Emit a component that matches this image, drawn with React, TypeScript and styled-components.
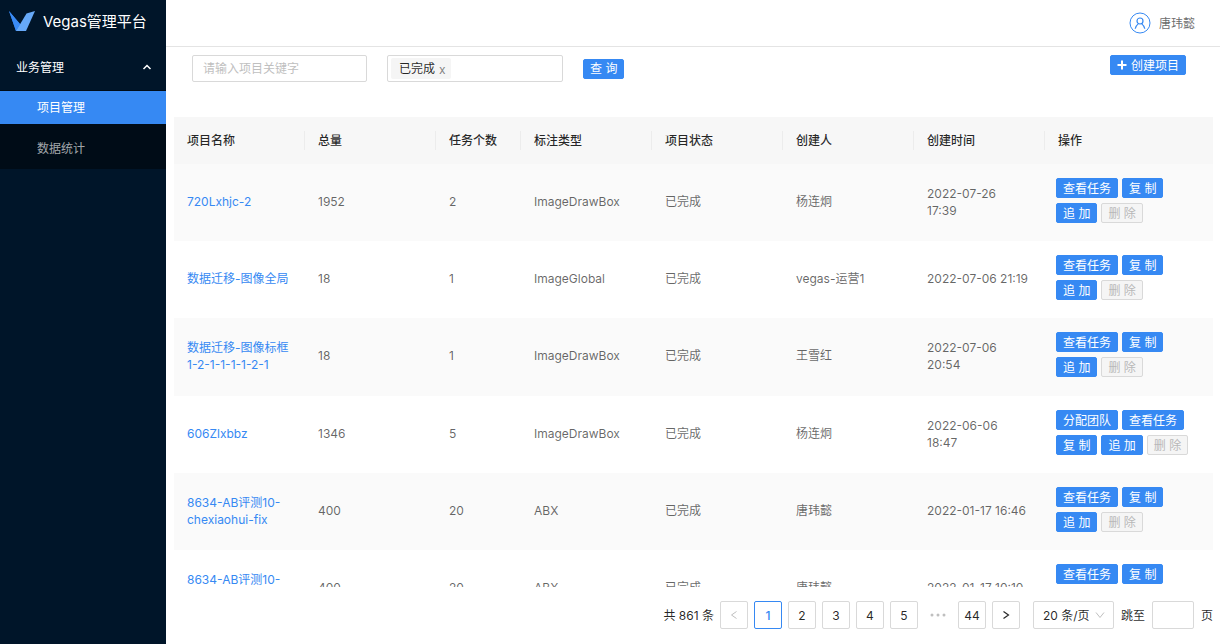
import React from "react";
import styled, { createGlobalStyle } from "styled-components";

const blue = "#3689f3";
const line = "#d9d9d9";

const GlobalStyle = createGlobalStyle`
  *, *::before, *::after { box-sizing: border-box; }
  body {
    margin: 0;
    background: #fff;
    color: rgba(0, 0, 0, 0.85);
    font: 12px/17px Inter, "Noto Sans CJK SC", sans-serif;
  }
  button, input, select { font: inherit; color: inherit; margin: 0; }
  a { text-decoration: none; }
`;

const Shell = styled.div`
  display: flex;
  height: 100vh;
`;

const Sidebar = styled.aside`
  flex: 0 0 166px;
  background: #001529;
`;

const Brand = styled.div`
  display: flex;
  align-items: center;
  gap: 8px;
  height: 42px;
  padding-left: 9px;
  color: #fff;
  font-size: 15px;
`;

const GroupButton = styled.button`
  display: flex;
  align-items: center;
  justify-content: space-between;
  width: 100%;
  height: 48px;
  padding: 2px 14px 0 16px;
  border: 0;
  background: none;
  color: #fff;
`;

const SubMenu = styled.nav`
  display: grid;
  gap: 8px;
  padding: 1px 0 4px;
  background: #000c17;
`;

const MenuLink = styled.a<{ $active?: boolean }>`
  display: flex;
  align-items: center;
  height: 33px;
  padding-left: 37px;
  color: ${(p) => (p.$active ? "#fff" : "rgba(255, 255, 255, 0.65)")};
  background: ${(p) => (p.$active ? blue : "transparent")};
`;

const Main = styled.main`
  flex: 1;
  min-width: 0;
  display: flex;
  flex-direction: column;
`;

const Header = styled.header`
  display: flex;
  align-items: center;
  justify-content: flex-end;
  gap: 8px;
  height: 47px;
  flex: none;
  padding-right: 25px;
  border-bottom: 1px solid #e4e4e4;
  color: rgba(0, 0, 0, 0.6);
`;

const Toolbar = styled.form`
  display: flex;
  align-items: flex-start;
  justify-content: space-between;
  padding: 8px 34px 35px 26px;
`;

const Filters = styled.div`
  display: flex;
  align-items: center;
  gap: 20px;
`;

const TextInput = styled.input`
  width: 175px;
  height: 27px;
  padding: 0 10px;
  border: 1px solid ${line};
  border-radius: 2px;
  background: #fff;
  &::placeholder { color: #bfbfbf; opacity: 1; }
`;

const TagSelect = styled.div`
  display: flex;
  align-items: center;
  width: 176px;
  height: 27px;
  padding: 0 3px;
  border: 1px solid ${line};
  border-radius: 2px;
`;

const Tag = styled.span`
  display: flex;
  align-items: center;
  gap: 4px;
  height: 21px;
  padding: 0 5px 0 8px;
  background: #f5f5f5;
  border-radius: 2px;
`;

const TagRemove = styled.button`
  display: flex;
  padding: 1px 0 0;
  border: 0;
  background: none;
  color: rgba(0, 0, 0, 0.5);
`;

const TagInput = styled.input`
  flex: 1;
  min-width: 0;
  border: 0;
  outline: 0;
  background: none;
`;

const Button = styled.button`
  display: inline-flex;
  align-items: center;
  justify-content: center;
  gap: 4px;
  height: 20px;
  padding: 0 6px;
  border: 1px solid ${blue};
  border-radius: 2px;
  background: ${blue};
  color: #fff;
  white-space: pre;
  &:disabled {
    border-color: ${line};
    background: #f5f5f5;
    color: #b8b8b8;
  }
`;

const TableArea = styled.div`
  flex: 1;
  min-height: 0;
  margin: 0 7px 0 8px;
  overflow: auto;
  scrollbar-width: none;
`;

const Table = styled.table`
  width: 100%;
  table-layout: fixed;
  border-collapse: separate;
  border-spacing: 0;
`;

const HeadCell = styled.th`
  position: sticky;
  top: 0;
  height: 47px;
  padding: 0;
  background: #f7f7f7;
  font-weight: 500;
  text-align: left;
`;

const HeadLabel = styled.div<{ $last?: boolean }>`
  padding: 1px 13px;
  border-right: 1px solid ${(p) => (p.$last ? "transparent" : "#ececec")};
`;

const Row = styled.tr`
  &:nth-child(odd) { background: #fafafa; }
  &:nth-child(3n) td { border-bottom: 1px solid #fafafa; }
`;

const Cell = styled.td`
  height: 77px;
  padding: 0 13px 2px;
  vertical-align: middle;
  color: rgba(0, 0, 0, 0.6);
  white-space: pre-line;
`;

const ProjectLink = styled.a`
  color: ${blue};
`;

const ActionCell = styled(Cell)`
  padding: 14px 13px 13px 11px;
`;

const Actions = styled.div`
  display: flex;
  flex-wrap: wrap;
  gap: 5px 4px;
  padding-bottom: 5px;
`;

const Pager = styled.nav`
  display: flex;
  align-items: center;
  justify-content: flex-end;
  gap: 6px;
  flex: none;
  padding: 14px 7px 15px;
`;

const PageButton = styled.button<{ $active?: boolean }>`
  display: flex;
  align-items: center;
  justify-content: center;
  width: 28px;
  height: 28px;
  padding: 0;
  border: 1px solid ${(p) => (p.$active ? blue : line)};
  border-radius: 2px;
  background: #fff;
  color: ${(p) => (p.$active ? blue : "rgba(0, 0, 0, 0.85)")};
  font-weight: ${(p) => (p.$active ? 500 : 400)};
  &:disabled { color: #bfbfbf; }
`;

const Jumper = styled.button`
  display: flex;
  align-items: center;
  justify-content: center;
  width: 28px;
  height: 28px;
  padding: 0;
  border: 0;
  background: none;
`;

const SizeBox = styled.label`
  display: grid;
  align-items: center;
  margin-left: 7px;
  color: #bfbfbf;
  & > * { grid-area: 1 / 1; }
  & > svg { justify-self: end; margin-right: 9px; pointer-events: none; }
`;

const SizeSelect = styled.select`
  appearance: none;
  width: 81px;
  height: 28px;
  padding: 0 9px;
  border: 1px solid ${line};
  border-radius: 2px;
  background: #fff;
  color: rgba(0, 0, 0, 0.85);
`;

const JumpLabel = styled.label`
  display: flex;
  align-items: center;
  gap: 7px;
  margin-left: 1px;
`;

const JumpInput = styled.input`
  width: 42px;
  height: 28px;
  padding: 0 8px;
  border: 1px solid ${line};
  border-radius: 2px;
`;

const Chevron = ({ d, size = 10, width = 1 }: { d: string; size?: number; width?: number }) => (
  <svg width={size} height={size} viewBox="0 0 10 10" fill="none" stroke="currentColor" strokeWidth={width} aria-hidden="true">
    <path d={d} />
  </svg>
);

const Logo = () => (
  <svg width="26" height="20" viewBox="0 0 26 20" aria-hidden="true">
    <path d="M0 0l11 13L17 20H7z" fill="#2f80ed" />
    <path d="M26 0l-8.500 2.500L7 20h10z" fill="#66a9f8" />
    <path d="M0 0l11 13L7 20z" fill="#3a8bf5" />
  </svg>
);

const UserIcon = () => (
  <svg width="22" height="22" viewBox="0 0 22 22" fill="none" stroke={blue} aria-hidden="true">
    <circle cx="11" cy="11" r="10" />
    <circle cx="11" cy="9" r="3" strokeWidth="1.200" />
    <path d="M6.200 16.800c.2-1.700 1.300-3.500 3-4.900M15.800 16.800c-.2-1.700-1.300-3.500-3-4.900" strokeWidth="1.200" />
  </svg>
);

const PlusIcon = () => (
  <svg width="10" height="10" viewBox="0 0 10 10" stroke="currentColor" strokeWidth="2" aria-hidden="true">
    <path d="M5 .5v9M.5 5h9" />
  </svg>
);

const Dots = () => (
  <svg width="16" height="4" viewBox="0 0 16 4" fill="#bfbfbf" aria-hidden="true">
    <circle cx="2" cy="2" r="1.500" />
    <circle cx="8" cy="2" r="1.500" />
    <circle cx="14" cy="2" r="1.500" />
  </svg>
);

const columns = [
  { title: "项目名称", width: 131 },
  { title: "总量", width: 131 },
  { title: "任务个数", width: 85 },
  { title: "标注类型", width: 131 },
  { title: "项目状态", width: 131 },
  { title: "创建人", width: 131 },
  { title: "创建时间", width: 131 },
  { title: "操作", width: 168 },
];

const rows = [
  { name: "720Lxhjc-2", total: 1952, tasks: 2, type: "ImageDrawBox", owner: "杨连炯", time: "2022-07-26\n17:39" },
  { name: "数据迁移-图像全局", total: 18, tasks: 1, type: "ImageGlobal", owner: "vegas-运营1", time: "2022-07-06 21:19" },
  { name: "数据迁移-图像标框1-2-1-1-1-1-2-1", total: 18, tasks: 1, type: "ImageDrawBox", owner: "王雪红", time: "2022-07-06\n20:54" },
  { name: "606Zlxbbz", total: 1346, tasks: 5, type: "ImageDrawBox", owner: "杨连炯", time: "2022-06-06\n18:47", assign: true },
  { name: "8634-AB评测10-chexiaohui-fix", total: 400, tasks: 20, type: "ABX", owner: "唐玮懿", time: "2022-01-17 16:46" },
  { name: "8634-AB评测10-chexiaohui", total: 400, tasks: 20, type: "ABX", owner: "唐玮懿", time: "2022-01-17 10:10" },
];

export default function App() {
  return (
    <Shell>
      <GlobalStyle />
      <Sidebar>
        <Brand>
          <Logo />
          Vegas管理平台
        </Brand>
        <GroupButton type="button" aria-expanded="true">
          业务管理
          <Chevron d="M1.500 7L5 3.500 8.500 7" width={1.5} />
        </GroupButton>
        <SubMenu>
          <MenuLink href="#projects" $active aria-current="page">项目管理</MenuLink>
          <MenuLink href="#statistics">数据统计</MenuLink>
        </SubMenu>
      </Sidebar>
      <Main>
        <Header>
          <UserIcon />
          唐玮懿
        </Header>
        <Toolbar onSubmit={(e) => e.preventDefault()}>
          <Filters>
            <TextInput aria-label="项目关键字" placeholder="请输入项目关键字" />
            <TagSelect>
              <Tag>
                已完成
                <TagRemove type="button" aria-label="移除">x</TagRemove>
              </Tag>
              <TagInput aria-label="项目状态" />
            </TagSelect>
            <Button type="submit">查 询</Button>
          </Filters>
          <Button type="button">
            <PlusIcon />
            创建项目
          </Button>
        </Toolbar>
        <TableArea>
          <Table>
            <colgroup>
              {columns.map((c) => <col key={c.title} width={c.width} />)}
            </colgroup>
            <thead>
              <tr>
                {columns.map((c, i) => (
                  <HeadCell key={c.title} scope="col">
                    <HeadLabel $last={i === columns.length - 1}>{c.title}</HeadLabel>
                  </HeadCell>
                ))}
              </tr>
            </thead>
            <tbody>
              {rows.map((r, i) => (
                <Row key={i}>
                  <Cell><ProjectLink href="#project">{r.name}</ProjectLink></Cell>
                  <Cell>{r.total}</Cell>
                  <Cell>{r.tasks}</Cell>
                  <Cell>{r.type}</Cell>
                  <Cell>已完成</Cell>
                  <Cell>{r.owner}</Cell>
                  <Cell>{r.time}</Cell>
                  <ActionCell>
                    <Actions>
                      {r.assign && <Button type="button">分配团队</Button>}
                      <Button type="button">查看任务</Button>
                      <Button type="button">复 制</Button>
                      <Button type="button">追 加</Button>
                      <Button type="button" disabled>删 除</Button>
                    </Actions>
                  </ActionCell>
                </Row>
              ))}
            </tbody>
          </Table>
        </TableArea>
        <Pager aria-label="分页">
          <span>共 861 条</span>
          <PageButton type="button" disabled aria-label="上一页"><Chevron d="M7.500 1.500L2.500 5l5 3.500" /></PageButton>
          {[1, 2, 3, 4, 5].map((n) => (
            <PageButton key={n} type="button" $active={n === 1}>{n}</PageButton>
          ))}
          <Jumper type="button" aria-label="向后 5 页"><Dots /></Jumper>
          <PageButton type="button">44</PageButton>
          <PageButton type="button" aria-label="下一页"><Chevron d="M2.500 1.500l5 3.500-5 3.500" width={1.2} /></PageButton>
          <SizeBox>
            <SizeSelect aria-label="每页条数">
              <option>20 条/页</option>
            </SizeSelect>
            <Chevron d="M1 2.500l4 5 4-5" />
          </SizeBox>
          <JumpLabel>
            跳至
            <JumpInput />
            页
          </JumpLabel>
        </Pager>
      </Main>
    </Shell>
  );
}
